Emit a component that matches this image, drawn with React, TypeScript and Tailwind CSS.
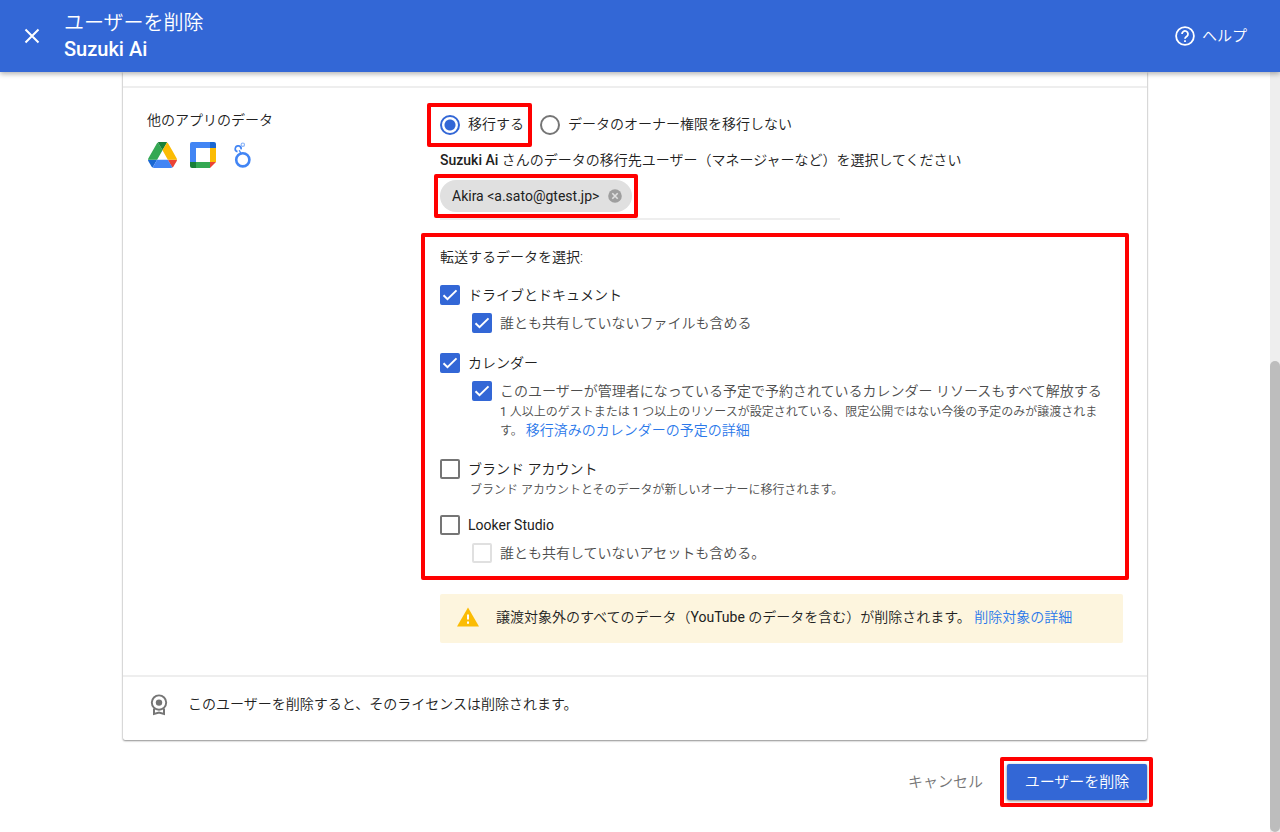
import React, { useState } from "react";

type CheckRowProps = {
  id: string;
  label: string;
  checked: boolean;
  onChange: () => void;
  sub?: boolean;
  latin?: boolean;
  disabled?: boolean;
};

const Highlight = ({ className }: { className: string }) => (
  <span
    aria-hidden="true"
    className={`pointer-events-none absolute rounded-xs border-4 border-[#ff0000] ${className}`}
  />
);

const CheckRow = ({ id, label, checked, onChange, sub, latin, disabled }: CheckRowProps) => (
  <div className={`flex h-7 items-center gap-2 ${sub ? "pl-8" : ""}`}>
    <span className="grid size-5 shrink-0">
      <input
        id={id}
        type="checkbox"
        checked={checked}
        disabled={disabled}
        onChange={onChange}
        className="col-start-1 row-start-1 size-5 appearance-none rounded-xs border-2 border-[#757575] checked:border-[#3367d6] checked:bg-[#3367d6] disabled:border-[#e0e0e0]"
      />
      {checked && (
        <svg
          viewBox="0 0 20 20"
          className="pointer-events-none col-start-1 row-start-1 size-5"
          fill="none"
          stroke="#fff"
          strokeWidth="2"
        >
          <path d="M3.5 10.2l4 4L16.5 5.4" />
        </svg>
      )}
    </span>
    <label
      htmlFor={id}
      className={`${sub ? "text-[#4d4d4d]" : "text-[#212121]"} ${latin ? "font-normal" : ""}`}
    >
      {label}
    </label>
  </div>
);

const DriveIcon = () => (
  <svg viewBox="0 0 87.3 78" className="h-[26px] w-[29px]">
    <path d="m6.6 66.85 3.85 6.65c.8 1.4 1.95 2.5 3.3 3.3l13.75-23.8h-27.5c0 1.55.4 3.1 1.2 4.5z" fill="#1967d2" />
    <path d="m43.65 25-13.75-23.8c-1.35.8-2.5 1.9-3.3 3.3l-25.4 44a9.06 9.06 0 0 0 -1.2 4.5h27.5z" fill="#34a853" />
    <path d="m73.55 76.8c1.35-.8 2.5-1.9 3.3-3.3l1.6-2.75 7.65-13.25c.8-1.4 1.2-2.95 1.2-4.5h-27.502l5.852 11.5z" fill="#ea4335" />
    <path d="m43.65 25 13.75-23.8c-1.35-.8-2.9-1.2-4.5-1.2h-18.5c-1.6 0-3.15.45-4.5 1.2z" fill="#188038" />
    <path d="m59.8 53h-32.3l-13.75 23.8c1.35.8 2.9 1.2 4.5 1.2h50.8c1.6 0 3.15-.45 4.5-1.2z" fill="#4285f4" />
    <path d="m73.4 26.5-12.7-22c-.8-1.4-1.95-2.5-3.3-3.3l-13.75 23.8 16.15 28h27.45c0-1.55-.4-3.1-1.2-4.5z" fill="#fbbc04" />
  </svg>
);

const CalendarIcon = () => (
  <svg viewBox="0 0 26 26" className="size-[26px]">
    <path d="M2 0h18v6H6v14H0V2a2 2 0 0 1 2-2z" fill="#4285f4" />
    <path d="M20 0h4a2 2 0 0 1 2 2v4h-6z" fill="#1967d2" />
    <path d="M20 6h6v14h-6z" fill="#fbbc04" />
    <path d="M6 20h14v6H6z" fill="#34a853" />
    <path d="M0 20h6v6H2a2 2 0 0 1-2-2z" fill="#188038" />
    <path d="M20 20h6l-6 6z" fill="#ea4335" />
  </svg>
);

const LookerIcon = () => (
  <svg viewBox="0 0 17 26" className="h-[26px] w-[17px]" fill="none" stroke="#4285f4">
    <circle cx="8.8" cy="17.8" r="6.6" strokeWidth="2.6" />
    <path d="M3.500 9.600A2.900 2.900 0 1 1 7 7.400" strokeWidth="1.7" />
    <path d="M5.200 8.200L6.800 11" strokeWidth="1.300" />
    <circle cx="8.800" cy="2.700" r="1.700" stroke="#8ab4f8" strokeWidth="1.200" />
  </svg>
);

const LicenseIcon = () => (
  <svg viewBox="0 0 18 22" className="h-[22px] w-[18px]">
    <circle cx="9" cy="8.6" r="7.2" fill="none" stroke="#757575" strokeWidth="1.9" />
    <circle cx="9" cy="8.6" r="3.2" fill="#757575" />
    <path d="M4 14.500V20l5-1.500L14 20v-5.500" fill="none" stroke="#757575" strokeWidth="2" />
  </svg>
);

const App = () => {
  const [mode, setMode] = useState("transfer");
  const [email, setEmail] = useState("");
  const [checks, setChecks] = useState<Record<string, boolean>>({
    drive: true,
    driveUnshared: true,
    calendar: true,
    calendarRelease: true,
    brand: false,
    looker: false,
    lookerUnshared: false,
  });

  const toggle = (key: string) => {
    setChecks(prev => ({ ...prev, [key]: !prev[key] }));
  };

  const modes = [
    { id: "transfer", label: "移行する" },
    { id: "keep", label: "データのオーナー権限を移行しない" },
  ];

  return (
    <div
      lang="ja"
      className="flex h-screen flex-col bg-white font-[Roboto,'Noto_Sans_CJK_JP',sans-serif] text-sm leading-5 font-[350] text-[#212121]"
    >
      <header className="z-10 flex h-[72px] shrink-0 items-center bg-[#3367d6] pr-[33px] pl-5 text-white shadow-[0_2px_5px_rgba(0,0,0,0.3)]">
        <button type="button" aria-label="閉じる" className="mr-5 size-6">
          <svg viewBox="0 0 24 24" className="size-6" stroke="currentColor" strokeWidth="2">
            <path d="M5.500 5.500l13 13M18.500 5.500l-13 13" />
          </svg>
        </button>
        <h1 className="flex-1 text-xl leading-[26px]">
          <span className="block font-[350]">ユーザーを削除</span>
          <span className="block font-medium">Suzuki Ai</span>
        </h1>
        <button type="button" className="flex items-center gap-[7px] text-[15px]">
          <svg viewBox="0 0 20 20" className="size-5" fill="none" stroke="currentColor" strokeWidth="1.8">
            <circle cx="10" cy="10" r="8.900" />
            <path d="M7 8a3 3 0 1 1 4.900 2.300C10.700 11.200 10 11.600 10 12.800" />
            <path d="M10 14.200v1.900" />
          </svg>
          ヘルプ
        </button>
      </header>

      <div className="flex min-h-0 flex-1">
        <main className="min-w-0 flex-1 overflow-hidden">
          <div className="mx-auto max-w-[1024px]">
            <div className="rounded-b-xs pt-[14px] shadow-[0_1px_2px_rgba(0,0,0,0.4),0_0_2px_rgba(0,0,0,0.2)]">
              <section className="flex border-y-2 border-[#eeeeee] px-6 pb-8">
                <div className="w-[293px] shrink-0 pt-[22px]">
                  <h2>他のアプリのデータ</h2>
                  <div className="mt-3 flex items-center gap-[13px] pl-px">
                    <DriveIcon />
                    <CalendarIcon />
                    <span className="pl-[5px]">
                      <LookerIcon />
                    </span>
                  </div>
                </div>

                <div className="min-w-0 flex-1 pt-[26px]">
                  <div className="flex gap-4">
                    {modes.map(item => (
                      <div key={item.id} className="relative flex items-center gap-2">
                        <input
                          id={item.id}
                          type="radio"
                          name="mode"
                          checked={mode === item.id}
                          onChange={() => setMode(item.id)}
                          className="size-5 appearance-none rounded-full border-2 border-[#757575] checked:border-[#3367d6] checked:bg-[radial-gradient(circle,#3367d6_5px,transparent_6px)]"
                        />
                        <label htmlFor={item.id} className="pb-0.5">
                          {item.label}
                        </label>
                        {item.id === "transfer" && (
                          <Highlight className="-top-[11px] -right-2 -bottom-[11px] -left-[13px]" />
                        )}
                      </div>
                    ))}
                  </div>

                  <p className="mt-[14px]">
                    <b className="font-medium">Suzuki Ai</b>{" "}
                    さんのデータの移行先ユーザー（マネージャーなど）を選択してください
                  </p>

                  <div className="mt-[10px] flex w-[400px] border-b-2 border-[#eeeeee] pb-[6px]">
                    <div className="relative flex h-8 items-center gap-[9px] rounded-full bg-[#e0e0e0] pr-[10px] pl-3">
                      <span className="font-normal">Akira &lt;a.sato@gtest.jp&gt;</span>
                      <button type="button" aria-label="Akira を削除">
                        <svg viewBox="0 0 14 14" className="size-[14px]">
                          <circle cx="7" cy="7" r="6.800" fill="#9e9e9e" />
                          <path d="M4.300 4.300l5.400 5.400M9.700 4.300l-5.400 5.400" stroke="#e0e0e0" strokeWidth="1.600" />
                        </svg>
                      </button>
                      <Highlight className="-inset-[6px]" />
                    </div>
                    <input
                      type="text"
                      aria-label="移行先ユーザー"
                      value={email}
                      onChange={e => setEmail(e.target.value)}
                      className="min-w-0 flex-1 px-2 outline-none"
                    />
                  </div>

                  <fieldset className="relative mt-[27px]">
                    <legend>転送するデータを選択:</legend>
                    <div className="mt-[14px]">
                      <CheckRow id="drive" label="ドライブとドキュメント" checked={checks.drive} onChange={() => toggle("drive")} />
                      <CheckRow sub id="driveUnshared" label="誰とも共有していないファイルも含める" checked={checks.driveUnshared} onChange={() => toggle("driveUnshared")} />
                    </div>
                    <div className="mt-3">
                      <CheckRow id="calendar" label="カレンダー" checked={checks.calendar} onChange={() => toggle("calendar")} />
                      <CheckRow
                        sub
                        id="calendarRelease"
                        label="このユーザーが管理者になっている予定で予約されているカレンダー リソースもすべて解放する"
                        checked={checks.calendarRelease}
                        onChange={() => toggle("calendarRelease")}
                      />
                      <p className="-mt-0.5 pr-2 pl-[60px] text-xs leading-[18px] text-[#4d4d4d]">
                        <span className="font-normal">1</span> 人以上のゲストまたは <span className="font-normal">1</span>{" "}
                        つ以上のリソースが設定されている、限定公開ではない今後の予定のみが譲渡されます。{" "}
                        <a href="#calendar-detail" className="text-sm leading-[18px] text-[#2a78ea]">
                          移行済みのカレンダーの予定の詳細
                        </a>
                      </p>
                    </div>
                    <div className="mt-[15px]">
                      <CheckRow id="brand" label="ブランド アカウント" checked={checks.brand} onChange={() => toggle("brand")} />
                      <p className="-mt-0.5 pl-[30px] text-xs leading-[18px] text-[#4d4d4d]">
                        ブランド アカウントとそのデータが新しいオーナーに移行されます。
                      </p>
                    </div>
                    <div className="mt-3">
                      <CheckRow latin id="looker" label="Looker Studio" checked={checks.looker} onChange={() => toggle("looker")} />
                      <CheckRow
                        sub
                        disabled={!checks.looker}
                        id="lookerUnshared"
                        label="誰とも共有していないアセットも含める。"
                        checked={checks.lookerUnshared}
                        onChange={() => toggle("lookerUnshared")}
                      />
                    </div>
                    <Highlight className="-top-[34px] -right-[6px] -bottom-[13px] -left-[19px]" />
                  </fieldset>

                  <div className="mt-[27px] flex h-[49px] items-center rounded-xs bg-[#fdf5de] px-4 pb-[3px]">
                    <svg viewBox="0 0 24 20" className="mr-4 h-5 w-6">
                      <path d="M12 0.500L23 19.500H1z" fill="#fbbc04" />
                      <path d="M12 7.500v5M12 14.500v2.200" stroke="#fff" strokeWidth="2" />
                    </svg>
                    <p>
                      譲渡対象外のすべてのデータ（<span className="font-normal">YouTube</span> のデータを含む）が削除されます。{" "}
                      <a href="#delete-detail" className="text-[#2a78ea]">
                        削除対象の詳細
                      </a>
                    </p>
                  </div>
                </div>
              </section>

              <section className="flex h-[63px] items-center gap-5 pb-[7px] pl-[27px]">
                <LicenseIcon />
                <p className="pb-0.5">このユーザーを削除すると、そのライセンスは削除されます。</p>
              </section>
            </div>

            <footer className="mt-6 flex justify-end gap-2 text-[15px]">
              <button type="button" className="h-9 px-4 text-[#757575]">
                キャンセル
              </button>
              <span className="relative">
                <button
                  type="button"
                  className="h-9 w-[140px] rounded-xs bg-[#3367d6] text-white shadow-[0_1px_3px_rgba(0,0,0,0.5)]"
                >
                  ユーザーを削除
                </button>
                <Highlight className="-top-[7px] -right-[6px] -bottom-[7px] -left-[7px]" />
              </span>
            </footer>
          </div>
        </main>
        <div aria-hidden="true" className="flex w-[10px] shrink-0 flex-col justify-end bg-[#eeeeee]">
          <div className="h-[62%] rounded-full bg-[#bdbdbd]" />
        </div>
      </div>
    </div>
  );
};

export default App;
